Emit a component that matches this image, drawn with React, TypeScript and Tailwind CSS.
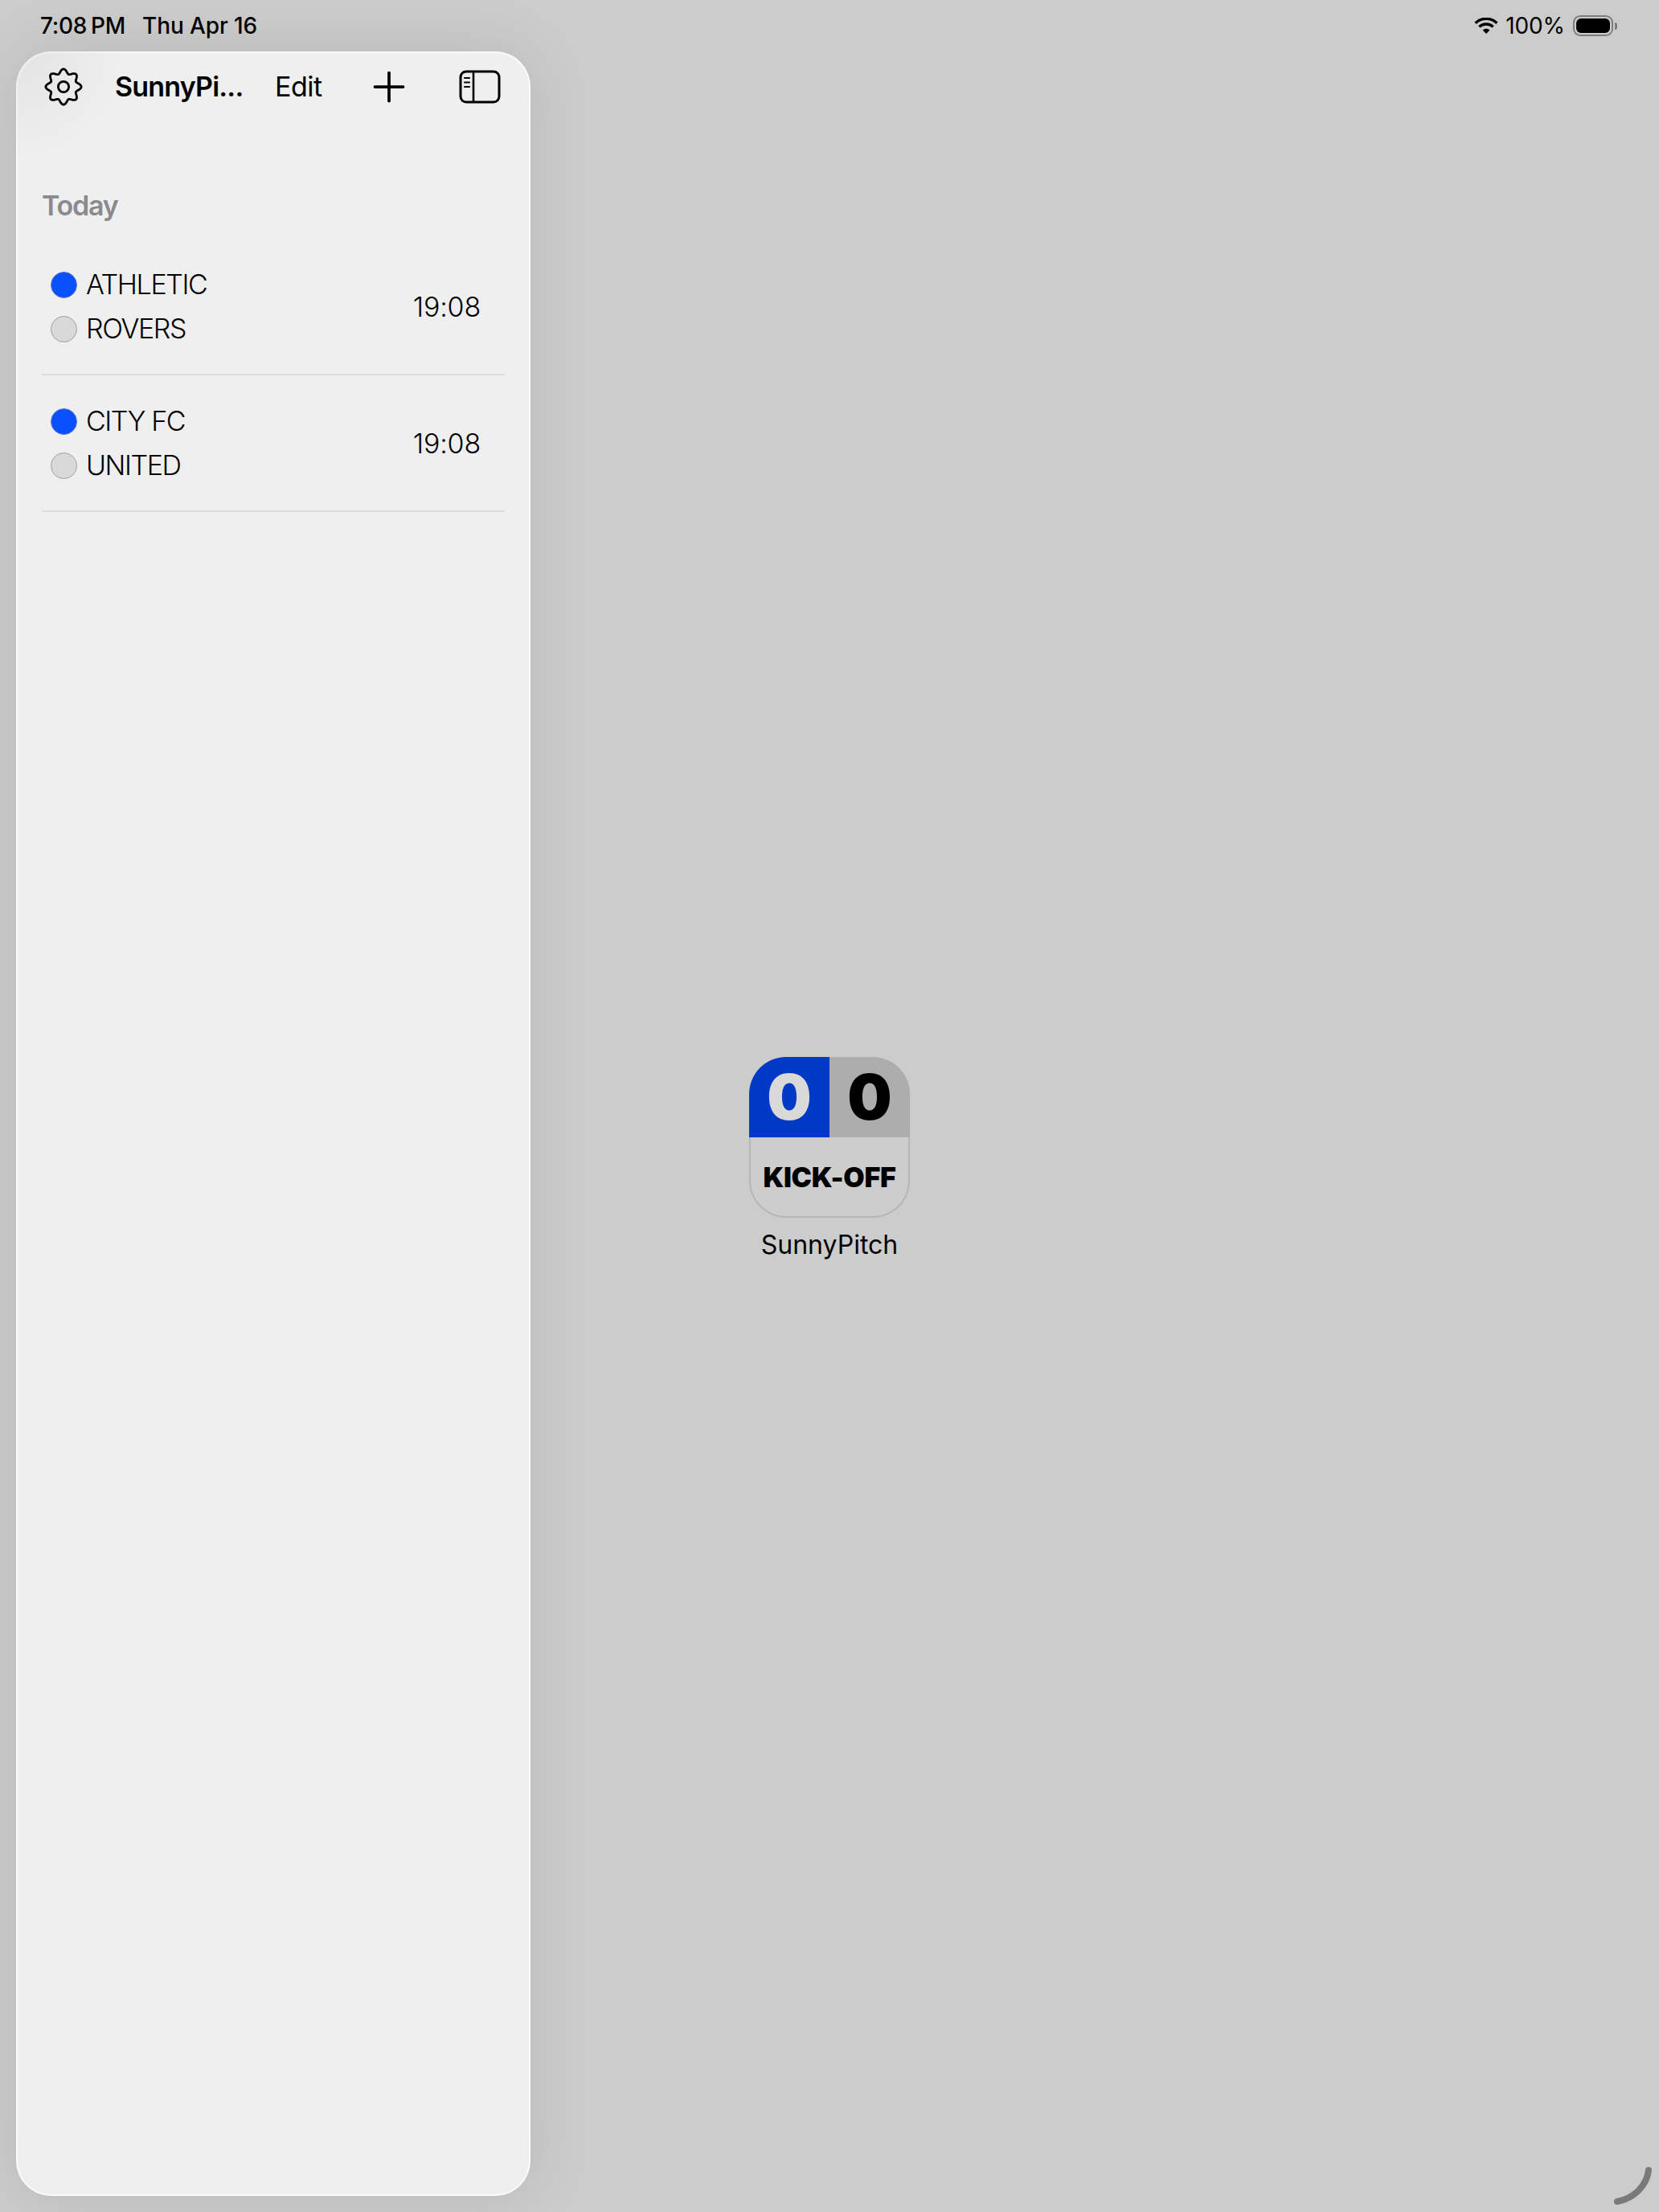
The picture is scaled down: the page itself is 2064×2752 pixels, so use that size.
import React from "react";
import { Plus } from "lucide-react";

const font = { fontFamily: '"Inter", "Liberation Sans", sans-serif' };

const gearPath =
  Array.from({ length: 144 }, (_, i) => {
    const t = (i / 144) * Math.PI * 2;
    const r = 19.4 + 2.7 * Math.cos(8 * t);
    return `${i === 0 ? "M" : "L"}${(24 + r * Math.cos(t)).toFixed(2)} ${(24 + r * Math.sin(t)).toFixed(2)}`;
  }).join(" ") + " Z";

function Dot({ on }: { on: boolean }) {
  return on ? (
    <span className="block h-[33px] w-[33px] rounded-full bg-[#0a50ff] border border-[#5a7ac8]" />
  ) : (
    <span className="block h-[33px] w-[33px] rounded-full bg-[#d9d9d9] border border-[#9f9f9f]" />
  );
}

function Match({ a, b }: { a: string; b: string }) {
  return (
    <div className="flex h-[170px] items-center justify-between border-b-2 border-[#dcdcdc] pl-[11px] pr-[30px] pt-[1px]">
      <div className="flex flex-col gap-[22px]">
        <div className="flex h-[33px] items-center gap-[11px]">
          <Dot on />
          <span className="text-[34px] font-light leading-none tracking-[-1.4px] text-black">{a}</span>
        </div>
        <div className="flex h-[33px] items-center gap-[11px]">
          <Dot on={false} />
          <span className="text-[34px] font-light leading-none tracking-[-1.4px] text-black">{b}</span>
        </div>
      </div>
      <span className="text-[34px] font-light leading-none tracking-[-0.2px] text-black">19:08</span>
    </div>
  );
}

export default function App() {
  return (
    <div style={font} className="relative h-[2752px] w-[2064px] overflow-hidden bg-[#cccccc]">
      <div className="flex h-[64px] items-center justify-between pl-[50px] pr-[52px] text-black">
        <div className="flex items-center text-[28px] font-medium leading-none">
          <span className="tracking-[-0.3px]">7:08</span>
          <span className="ml-[5px] tracking-[-0.3px]">PM</span>
          <span className="ml-[21px] tracking-[-0.1px]">Thu Apr 16</span>
        </div>
        <div className="flex items-center">
          <svg width="30" height="20" viewBox="0 0 30 20" className="mr-[9px]">
            <path d="M15 20 L10.6 15.4 C13 13.2 17 13.2 19.4 15.4 Z" fill="#000" />
            <path d="M6.4 11.4 C10.9 6.9 19.1 6.9 23.6 11.4" fill="none" stroke="#000" strokeWidth="3.4" />
            <path d="M1.6 6.7 C9 -0.6 21 -0.6 28.4 6.7" fill="none" stroke="#000" strokeWidth="3.4" />
          </svg>
          <span className="text-[28px] font-normal leading-none tracking-[-0.1px]">100%</span>
          <span className="ml-[10px] flex h-[26px] w-[50px] items-center rounded-[9px] border-2 border-[#7d7d7d] p-[2px]">
            <span className="block h-full w-full rounded-[6px] bg-black" />
          </span>
          <span className="ml-[2px] block h-[9px] w-[3px] rounded-r-full bg-[#7d7d7d]" />
        </div>
      </div>

      <aside className="relative ml-[20px] h-[2668px] w-[640px] overflow-hidden rounded-[44px] bg-[#efefef] shadow-[inset_0_0_0_2px_rgba(255,255,255,0.65),0_0_80px_rgba(0,0,0,0.1)]">
        <div className="absolute left-0 top-0 h-[130px] w-[130px] bg-[radial-gradient(circle_at_0%_0%,rgba(0,0,0,0.05),rgba(0,0,0,0)_75%)]" />
        <div className="relative flex h-[88px] items-center">
          <svg width="48" height="48" viewBox="0 0 48 48" className="ml-[35px]" fill="none">
            <path d={gearPath} stroke="#000" strokeWidth="2.8" strokeLinejoin="round" />
            <circle cx="24" cy="24" r="6.6" stroke="#000" strokeWidth="2.8" />
          </svg>
          <span className="ml-[40px] w-[160px] text-[34px] font-semibold leading-none tracking-[-0.8px] text-black">SunnyPi...</span>
          <span className="ml-[39px] text-[34px] font-normal leading-none tracking-[-0.5px] text-black">Edit</span>
          <Plus className="ml-[53px] h-[60px] w-[60px] text-black" strokeWidth={1.5} />
          <svg width="52" height="42" viewBox="0 0 52 42" className="ml-[57px]" fill="none">
            <rect x="2" y="2" width="48" height="38" rx="7" stroke="#000" strokeWidth="3" />
            <path d="M18 2 V40" stroke="#000" strokeWidth="2.6" />
            <path d="M7 10 H13 M7 15.5 H13 M7 21 H13" stroke="#000" strokeWidth="2.2" strokeLinecap="round" />
          </svg>
        </div>

        <h2 className="ml-[32px] mt-[87px] text-[34px] font-semibold leading-none tracking-[-1.2px] text-[#8a8a8e]">Today</h2>

        <div className="mx-[32px] mt-[24px]">
          <Match a="ATHLETIC" b="ROVERS" />
          <Match a="CITY FC" b="UNITED" />
        </div>
      </aside>

      <div className="absolute left-[932px] top-[1315px] flex w-[200px] flex-col items-center">
        <div className="flex h-[200px] w-[200px] flex-col">
          <div className="flex h-[100px] shrink-0">
            <div className="flex w-1/2 items-center justify-center rounded-tl-[46px] bg-[#0039c6] text-[78px] font-black leading-none text-[#d9d9d9]">0</div>
            <div className="flex w-1/2 items-center justify-center rounded-tr-[46px] bg-[#adadad] text-[78px] font-black leading-none text-black">0</div>
          </div>
          <div className="flex flex-1 items-center justify-center rounded-b-[46px] border-x-2 border-b-2 border-[#b6b6b6] bg-[#cdcdcd] pt-[2px] text-[34px] font-black leading-none tracking-[-0.3px] text-black">KICK-OFF</div>
        </div>
        <span className="mt-[14px] whitespace-nowrap text-[32px] font-normal leading-[40px] text-black">SunnyPitch</span>
      </div>

      <svg width="52" height="52" viewBox="0 0 52 52" className="absolute left-[2006px] top-[2694px]" fill="none">
        <path d="M45 6 C43 24 28 41 6 45" stroke="#7a7a7a" strokeWidth="8" strokeLinecap="round" />
      </svg>
    </div>
  );
}
